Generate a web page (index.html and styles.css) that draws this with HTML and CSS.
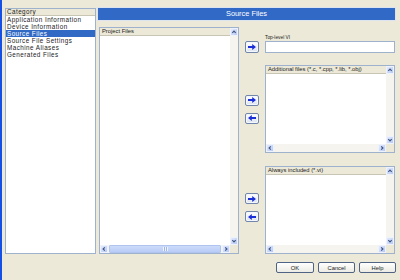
FILE: index.html
```html
<!DOCTYPE html>
<html>
<head>
<meta charset="utf-8">
<title>Source Files</title>
<link rel="stylesheet" href="styles.css">
</head>
<body>
<div class="dialog">
  <div class="main">
    <div class="category">
      <div class="cat-head">Category</div>
      <div class="cat-item">Application Information</div>
      <div class="cat-item">Device Information</div>
      <div class="cat-item selected">Source Files</div>
      <div class="cat-item">Source File Settings</div>
      <div class="cat-item">Machine Aliases</div>
      <div class="cat-item">Generated Files</div>
    </div>
    <div class="right">
      <div class="title">Source Files</div>
      <div class="content">
        <div class="panel project">
          <div class="list"><div class="list-head">Project Files</div></div>
          <div class="vscroll">
            <div class="sbtn"><svg viewBox="0 0 6 6"><polyline points="1.3,3.8 3,2.1 4.7,3.8" fill="none" stroke="#3F5482" stroke-width="1.2"/></svg></div>
            <div class="sbtn"><svg viewBox="0 0 6 6"><polyline points="1.3,2.2 3,3.9 4.7,2.2" fill="none" stroke="#3F5482" stroke-width="1.2"/></svg></div>
          </div>
          <div class="hscroll">
            <div class="sbtn"><svg viewBox="0 0 6 6"><polyline points="3.8,1.3 2.1,3 3.8,4.7" fill="none" stroke="#3F5482" stroke-width="1.2"/></svg></div>
            <div class="thumb"><span class="grip"></span></div>
            <div class="sbtn"><svg viewBox="0 0 6 6"><polyline points="2.2,1.3 3.9,3 2.2,4.7" fill="none" stroke="#3F5482" stroke-width="1.2"/></svg></div>
          </div>
          <div class="corner"></div>
        </div>
        <div class="side">
          <div class="row row-top">
            <div class="arrows">
              <div class="abtn"><svg viewBox="0 0 8 6"><path d="M0 2h4.2V0L8 3 4.2 6V4H0z" fill="#1B2FD8"/></svg></div>
            </div>
            <div class="field">
              <div class="field-label">Top-level VI</div>
              <div class="input"></div>
            </div>
          </div>
          <div class="row row-panel">
            <div class="arrows">
              <div class="abtn"><svg viewBox="0 0 8 6"><path d="M0 2h4.2V0L8 3 4.2 6V4H0z" fill="#1B2FD8"/></svg></div>
              <div class="abtn"><svg viewBox="0 0 8 6"><path d="M8 2H3.8V0L0 3l3.8 3V4H8z" fill="#1B2FD8"/></svg></div>
            </div>
            <div class="panel side-panel">
              <div class="list"><div class="list-head">Additional files (*.c, *.cpp, *.lib, *.obj)</div></div>
              <div class="vscroll">
                <div class="sbtn"><svg viewBox="0 0 6 6"><polyline points="1.3,3.8 3,2.1 4.7,3.8" fill="none" stroke="#3F5482" stroke-width="1.2"/></svg></div>
                <div class="sbtn"><svg viewBox="0 0 6 6"><polyline points="1.3,2.2 3,3.9 4.7,2.2" fill="none" stroke="#3F5482" stroke-width="1.2"/></svg></div>
              </div>
              <div class="hscroll">
                <div class="sbtn"><svg viewBox="0 0 6 6"><polyline points="3.8,1.3 2.1,3 3.8,4.7" fill="none" stroke="#3F5482" stroke-width="1.2"/></svg></div>
                <div class="sbtn"><svg viewBox="0 0 6 6"><polyline points="2.2,1.3 3.9,3 2.2,4.7" fill="none" stroke="#3F5482" stroke-width="1.2"/></svg></div>
              </div>
              <div class="corner"></div>
            </div>
          </div>
          <div class="row row-panel lower">
            <div class="arrows shifted">
              <div class="abtn"><svg viewBox="0 0 8 6"><path d="M0 2h4.2V0L8 3 4.2 6V4H0z" fill="#1B2FD8"/></svg></div>
              <div class="abtn"><svg viewBox="0 0 8 6"><path d="M8 2H3.8V0L0 3l3.8 3V4H8z" fill="#1B2FD8"/></svg></div>
            </div>
            <div class="panel side-panel">
              <div class="list"><div class="list-head">Always included (*.vi)</div></div>
              <div class="vscroll">
                <div class="sbtn"><svg viewBox="0 0 6 6"><polyline points="1.3,3.8 3,2.1 4.7,3.8" fill="none" stroke="#3F5482" stroke-width="1.2"/></svg></div>
                <div class="sbtn"><svg viewBox="0 0 6 6"><polyline points="1.3,2.2 3,3.9 4.7,2.2" fill="none" stroke="#3F5482" stroke-width="1.2"/></svg></div>
              </div>
              <div class="hscroll">
                <div class="sbtn"><svg viewBox="0 0 6 6"><polyline points="3.8,1.3 2.1,3 3.8,4.7" fill="none" stroke="#3F5482" stroke-width="1.2"/></svg></div>
                <div class="sbtn"><svg viewBox="0 0 6 6"><polyline points="2.2,1.3 3.9,3 2.2,4.7" fill="none" stroke="#3F5482" stroke-width="1.2"/></svg></div>
              </div>
              <div class="corner"></div>
            </div>
          </div>
        </div>
      </div>
    </div>
  </div>
  <div class="buttons">
    <div class="btn ok">OK</div>
    <div class="btn">Cancel</div>
    <div class="btn">Help</div>
  </div>
</div>
</body>
</html>
```

FILE: styles.css
```css
html, body {
  margin: 0;
  padding: 0;
}
body {
  width: 400px;
  height: 280px;
  overflow: hidden;
  background: #ECE9D8;
  font-family: "Liberation Sans", Arial, sans-serif;
  color: #000;
}
.dialog {
  box-sizing: border-box;
  height: 280px;
  border-left: 2px solid #1550E6;
  padding: 7px 4px 0 3px;
  display: flex;
  flex-direction: column;
}
.main {
  display: flex;
  gap: 1px;
  height: 247px;
}
.category {
  box-sizing: border-box;
  width: 91px;
  height: 246px;
  margin-top: 1px;
  background: #fff;
  border: 1px solid #9EB1CD;
  font-size: 6.3px;
  letter-spacing: 0.45px;
  color: #222;
}
.cat-head {
  height: 6px;
  line-height: 6px;
  padding-left: 1px;
  background: #ECE9D8;
  border-bottom: 1px solid #C9C5B4;
}
.cat-item {
  height: 7px;
  line-height: 7px;
  padding-left: 1px;
  white-space: nowrap;
}
.cat-item.selected {
  background: #316AC5;
  color: #fff;
}
.right {
  width: 299px;
  display: flex;
  flex-direction: column;
}
.title {
  box-sizing: border-box;
  height: 14px;
  background: #3169C6;
  border: 1px solid #DDE4F0;
  color: #fff;
  font-size: 7.4px;
  line-height: 12px;
  text-align: center;
}
.content {
  display: flex;
  margin-top: 6px;
  padding-left: 2px;
  height: 227px;
}
.panel {
  box-sizing: border-box;
  border: 1px solid #9EB1CD;
  background: #fff;
  display: grid;
  grid-template-columns: 1fr 8px;
  grid-template-rows: 1fr 8px;
}
.project {
  width: 140px;
  height: 227px;
}
.list {
  min-width: 0;
  overflow: hidden;
}
.list-head {
  height: 7px;
  line-height: 7px;
  padding-left: 2px;
  font-size: 5.8px;
  color: #222;
  white-space: nowrap;
  background: #ECE9D8;
  border-bottom: 1px solid #C9C5B4;
}
.vscroll {
  display: flex;
  flex-direction: column;
  justify-content: space-between;
  background: #F5F4EE;
}
.hscroll {
  display: flex;
  justify-content: space-between;
  background: #F5F4EE;
}
.corner {
  background: #ECE9D8;
}
.sbtn {
  box-sizing: border-box;
  width: 8px;
  height: 8px;
  flex: 0 0 8px;
  border: 1px solid #EEF2FC;
  border-radius: 1px;
  background: linear-gradient(135deg, #E2EAFD, #B7CAF5);
  display: flex;
  align-items: center;
  justify-content: center;
}
.sbtn svg {
  width: 6px;
  height: 6px;
}
.thumb {
  flex: 1;
  margin: 0 1px;
  box-sizing: border-box;
  background: linear-gradient(#CCDBFB, #B9CCF6);
  border: 1px solid #B0C4F0;
  border-radius: 1px;
  display: flex;
  align-items: center;
  justify-content: center;
}
.grip {
  width: 5px;
  height: 4px;
  background: repeating-linear-gradient(90deg, #EEF3FE 0 1px, #9FB6E8 1px 2px);
}
.side {
  display: flex;
  flex-direction: column;
}
.row {
  display: flex;
}
.row-top {
  padding-top: 7px;
  align-items: flex-end;
}
.arrows {
  width: 26px;
  display: flex;
  flex-direction: column;
  align-items: center;
  justify-content: center;
  gap: 7px;
}
.arrows.shifted {
  padding-bottom: 5px;
}
.field {
  width: 130px;
}
.field-label {
  height: 7px;
  line-height: 7px;
  font-size: 4.8px;
  color: #222;
  white-space: nowrap;
}
.input {
  box-sizing: border-box;
  height: 12px;
  border: 1px solid #9EB1CD;
  background: #fff;
}
.row-panel {
  margin-top: 12px;
  height: 88px;
}
.row-panel.lower {
  margin-top: 13px;
}
.side-panel {
  width: 130px;
  height: 88px;
}
.abtn {
  box-sizing: border-box;
  width: 14px;
  height: 11px;
  border: 1px solid #7186AA;
  border-radius: 2px;
  background: linear-gradient(#FFFFFF, #DCE3EF);
  box-shadow: inset 0 0 0 1px #F4F7FC;
  display: flex;
  align-items: center;
  justify-content: center;
}
.row-top .abtn {
  height: 12px;
}
.abtn svg {
  width: 8px;
  height: 6px;
}
.buttons {
  display: flex;
  justify-content: flex-end;
  gap: 4px;
  padding-top: 8px;
}
.btn {
  box-sizing: border-box;
  width: 37px;
  height: 11px;
  border: 1px solid #4F6385;
  border-radius: 2px;
  background: linear-gradient(#FFFFFF, #ECEBE4);
  font-size: 5.8px;
  color: #222;
  display: flex;
  align-items: center;
  justify-content: center;
}
.btn.ok {
  width: 38px;
}
```
